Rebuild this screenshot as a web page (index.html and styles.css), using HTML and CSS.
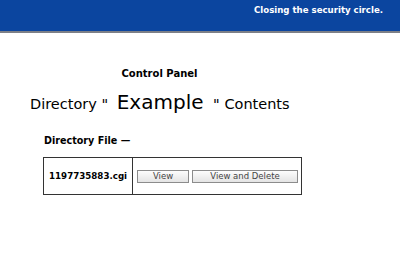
FILE: index.html
```html
<!DOCTYPE html>
<html>
<head>
<meta charset="utf-8">
<link rel="stylesheet" href="styles.css">
</head>
<body>
<div class="topbar"><span class="tagline">Closing the security circle.</span></div>
<div class="panel">
  <div class="panel-title">Control Panel</div>
  <div class="dir-line">Directory " <span class="dir-name">Example</span> " Contents</div>
</div>
<div class="section-title">Directory File —</div>
<div class="file-table">
  <div class="file-name">1197735883.cgi</div>
  <div class="file-actions">
    <button class="btn btn-view">View</button>
    <button class="btn btn-delete">View and Delete</button>
  </div>
</div>
</body>
</html>
```
FILE: styles.css
```css
html, body {
  margin: 0;
  padding: 0;
  background: #fff;
}
body {
  font-family: "DejaVu Sans", Verdana, sans-serif;
  color: #000;
}
.topbar {
  height: 31px;
  background: #0b459f;
  border-bottom: 2px solid #7d8087;
  box-sizing: content-box;
  display: flex;
  justify-content: flex-end;
  align-items: flex-start;
  padding-right: 17px;
}
.tagline {
  color: #fff;
  font-weight: bold;
  font-size: 8.6px;
  line-height: 10px;
  padding-top: 5px;
}
.panel {
  margin-left: 30px;
  width: 259px;
  padding-top: 35px;
}
.panel-title {
  text-align: center;
  font-weight: bold;
  font-size: 10px;
  line-height: 12px;
}
.dir-line {
  margin-top: 9px;
  font-size: 14.5px;
  line-height: 26px;
  white-space: nowrap;
}
.dir-name {
  font-size: 20px;
  margin: 0 5px 0 4px;
}
.section-title {
  margin: 18px 0 0 44px;
  font-weight: bold;
  font-size: 9.6px;
  line-height: 12px;
}
.file-table {
  margin: 10px 0 0 43px;
  width: 259px;
  height: 38px;
  box-sizing: border-box;
  border: 1px solid #333;
  display: grid;
  grid-template-columns: 89px 1fr;
}
.file-name {
  box-sizing: border-box;
  border-right: 1px solid #333;
  display: flex;
  align-items: center;
  padding-left: 5px;
  font-weight: bold;
  font-size: 8.7px;
}
.file-actions {
  display: flex;
  align-items: center;
  padding-left: 4px;
  gap: 3px;
}
.btn {
  height: 13px;
  margin: 0;
  padding: 0;
  box-sizing: border-box;
  border: 1px solid #8c8c8c;
  border-radius: 0;
  background: linear-gradient(#fdfdfd, #e4e4e4);
  font-family: "DejaVu Sans", Verdana, sans-serif;
  font-size: 8.5px;
  line-height: 11px;
  color: #444;
}
.btn-view {
  width: 52px;
}
.btn-delete {
  width: 106px;
}
```
